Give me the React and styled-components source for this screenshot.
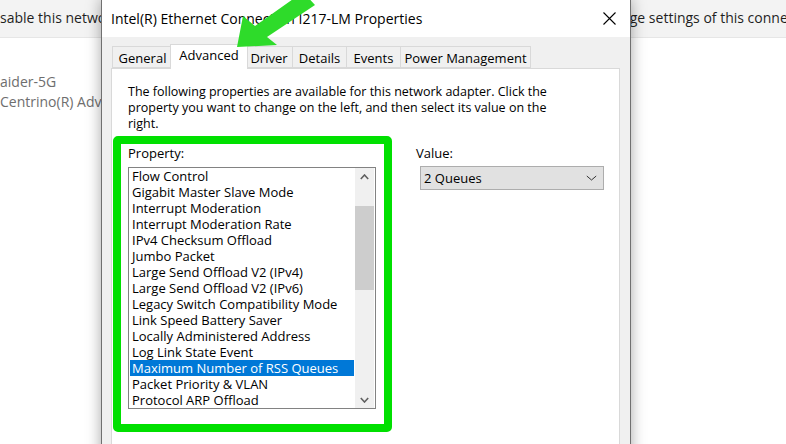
import React from "react";
import styled, { createGlobalStyle } from "styled-components";

const Global = createGlobalStyle`
  html, body { margin: 0; padding: 0; overflow: hidden; background: #fff; }
  * { box-sizing: border-box; }
`;

const Page = styled.div`
  position: relative;
  width: 786px;
  height: 444px;
  overflow: hidden;
  background: #fff;
  font-family: "Open Sans", "Noto Sans", Arial, sans-serif;
  color: #000;
`;

const Explorer = styled.div`
  display: flex;
  flex-direction: column;
  height: 100%;
`;

const CommandBar = styled.div`
  height: 38px;
  background: #f3f3f3;
  border-bottom: 1px solid #e6e6e6;
  display: grid;
  grid-template-columns: 596px max-content;
  align-items: center;
  font-size: 14px;
  color: #1f1f1f;
  white-space: nowrap;
`;

const CommandItem = styled.div`
  overflow: hidden;
  line-height: 20px;
  padding-bottom: 1px;
`;

const AdapterInfo = styled.div`
  padding-top: 34px;
  display: flex;
  flex-direction: column;
  font-size: 14px;
  line-height: 20px;
  color: #6e6e6e;
  white-space: nowrap;
`;

const Dialog = styled.div`
  position: absolute;
  left: 101px;
  top: -1px;
  width: 530px;
  height: 480px;
  border: 1px solid #707070;
  background: #f0f0f0;
  box-shadow: 0 0 14px rgba(0, 0, 0, 0.35);
  display: flex;
  flex-direction: column;
`;

const TitleBar = styled.div`
  height: 37px;
  flex: none;
  background: #fff;
  display: flex;
  align-items: center;
  padding-left: 9px;
  font-size: 14px;
  color: #000;
`;

const CloseButton = styled.div`
  margin-left: auto;
  width: 42px;
  height: 37px;
  display: flex;
  align-items: center;
  justify-content: center;
`;

const Body = styled.div`
  flex: 1;
  display: flex;
  flex-direction: column;
  padding: 7px 10px 0 9px;
`;

const TabRow = styled.div`
  position: relative;
  z-index: 1;
  display: flex;
  align-items: flex-end;
  height: 25px;
  padding-left: 1px;
  margin-bottom: -1px;
`;

const Tab = styled.div`
  width: ${(p) => p.$w}px;
  height: ${(p) => (p.$active ? 25 : 22)}px;
  margin-left: ${(p) => (p.$first ? 0 : p.$active ? -3 : -1)}px;
  margin-right: ${(p) => (p.$active ? -2 : 0)}px;
  margin-bottom: ${(p) => (p.$active ? 0 : 1)}px;
  padding-top: ${(p) => (p.$active ? 1 : 2)}px;
  position: relative;
  z-index: ${(p) => (p.$active ? 2 : 1)};
  border: 1px solid #d9d9d9;
  border-bottom: ${(p) => (p.$active ? "none" : "1px solid #d9d9d9")};
  background: ${(p) => (p.$active ? "#fff" : "#f0f0f0")};
  font-size: 13px;
  line-height: 19px;
  text-align: center;
  white-space: nowrap;
`;

const Panel = styled.div`
  flex: 1;
  background: #fff;
  border: 1px solid #d9d9d9;
  padding: 15px 16px;
`;

const Intro = styled.p`
  margin: 0;
  font-size: 12.5px;
  line-height: 16px;
  white-space: nowrap;
`;

const Row = styled.div`
  display: flex;
  align-items: flex-start;
`;

const Highlight = styled.div`
  margin-left: -15px;
  margin-top: 4px;
  border: 8px solid #00e000;
  border-radius: 5px;
  padding: 1px 8px 15px 7px;
  display: flex;
  flex-direction: column;
`;

const FieldLabel = styled.div`
  font-size: 13px;
  line-height: 16px;
`;

const ListBox = styled.div`
  margin-top: 6px;
  width: 248px;
  height: 242px;
  border: 1px solid #828282;
  padding-right: 1px;
  display: flex;
`;

const Items = styled.div`
  flex: 1;
  padding: 0 1px;
  display: flex;
  flex-direction: column;
  overflow: hidden;
`;

const Item = styled.div`
  height: 16px;
  line-height: 16px;
  padding-left: 2px;
  font-size: 13px;
  white-space: nowrap;
  background: ${(p) => (p.$selected ? "#0078d7" : "transparent")};
  color: ${(p) => (p.$selected ? "#fff" : "#000")};
`;

const ScrollBar = styled.div`
  width: 19px;
  background: #f0f0f0;
  display: flex;
  flex-direction: column;
`;

const ScrollArrow = styled.div`
  height: 17px;
  display: flex;
  align-items: center;
  justify-content: center;
`;

const Thumb = styled.div`
  margin-top: 21px;
  height: 84px;
  background: #cdcdcd;
`;

const Spacer = styled.div`
  flex: 1;
`;

const ValueSection = styled.div`
  margin-left: 24px;
  padding-top: 13px;
  display: flex;
  flex-direction: column;
`;

const Select = styled.div`
  margin-top: 5px;
  margin-left: 4px;
  width: 184px;
  height: 24px;
  background: #e1e1e1;
  border: 1px solid #adadad;
  padding: 0 6px 0 3px;
  display: flex;
  align-items: center;
  justify-content: space-between;
  font-size: 13px;
`;

const Arrow = styled.svg`
  position: absolute;
  left: 230px;
  top: 0;
  overflow: visible;
  z-index: 5;
`;

const properties = [
  "Flow Control",
  "Gigabit Master Slave Mode",
  "Interrupt Moderation",
  "Interrupt Moderation Rate",
  "IPv4 Checksum Offload",
  "Jumbo Packet",
  "Large Send Offload V2 (IPv4)",
  "Large Send Offload V2 (IPv6)",
  "Legacy Switch Compatibility Mode",
  "Link Speed Battery Saver",
  "Locally Administered Address",
  "Log Link State Event",
  "Maximum Number of RSS Queues",
  "Packet Priority & VLAN",
  "Protocol ARP Offload",
];

const tabs = [
  { label: "General", w: 61 },
  { label: "Advanced", w: 78, active: true },
  { label: "Driver", w: 48 },
  { label: "Details", w: 55 },
  { label: "Events", w: 55 },
  { label: "Power Management", w: 131 },
];

const Chevron = ({ up, color = "#606060", width = 9, sw = 1.6 }) => (
  <svg width={width} height="6" viewBox={`0 0 ${width} 6`}>
    <polyline
      points={up ? `0.8,5 ${width / 2},1 ${width - 0.8},5` : `0.8,1 ${width / 2},5 ${width - 0.8},1`}
      fill="none"
      stroke={color}
      strokeWidth={sw}
    />
  </svg>
);

export default function App() {
  return (
    <Page>
      <Global />
      <Explorer>
        <CommandBar>
          <CommandItem>sable this network device</CommandItem>
          <CommandItem>Change settings of this connection</CommandItem>
        </CommandBar>
        <AdapterInfo>
          <div>aider-5G</div>
          <div>Centrino(R) Advanced-N 6235</div>
        </AdapterInfo>
      </Explorer>

      <Dialog>
        <TitleBar>
          Intel(R) Ethernet Connection I217-LM Properties
          <CloseButton>
            <svg width="13" height="13" viewBox="0 0 13 13">
              <path d="M0.5 0.5 L12.5 12.5 M12.5 0.5 L0.5 12.5" stroke="#000" strokeWidth="1.1" fill="none" />
            </svg>
          </CloseButton>
        </TitleBar>
        <Body>
          <TabRow>
            {tabs.map((t, i) => (
              <Tab key={t.label} $w={t.w} $active={t.active} $first={i === 0}>
                {t.label}
              </Tab>
            ))}
          </TabRow>
          <Panel>
            <Intro>
              The following properties are available for this network adapter. Click the
              <br />
              property you want to change on the left, and then select its value on the
              <br />
              right.
            </Intro>
            <Row>
              <Highlight>
                <FieldLabel>Property:</FieldLabel>
                <ListBox>
                  <Items>
                    {properties.map((p) => (
                      <Item key={p} $selected={p === "Maximum Number of RSS Queues"}>
                        {p}
                      </Item>
                    ))}
                  </Items>
                  <ScrollBar>
                    <ScrollArrow>
                      <Chevron up />
                    </ScrollArrow>
                    <Thumb />
                    <Spacer />
                    <ScrollArrow>
                      <Chevron />
                    </ScrollArrow>
                  </ScrollBar>
                </ListBox>
              </Highlight>
              <ValueSection>
                <FieldLabel>Value:</FieldLabel>
                <Select>
                  <span>2 Queues</span>
                  <Chevron color="#333" width={11} sw={1} />
                </Select>
              </ValueSection>
            </Row>
          </Panel>
        </Body>
      </Dialog>

      <Arrow width="90" height="55" viewBox="0 0 90 55">
        <polygon
          points="7,47 13,16 25,26 73,-8 85,5 37,37 47,45"
          fill="#2edb2a"
        />
      </Arrow>
    </Page>
  );
}
